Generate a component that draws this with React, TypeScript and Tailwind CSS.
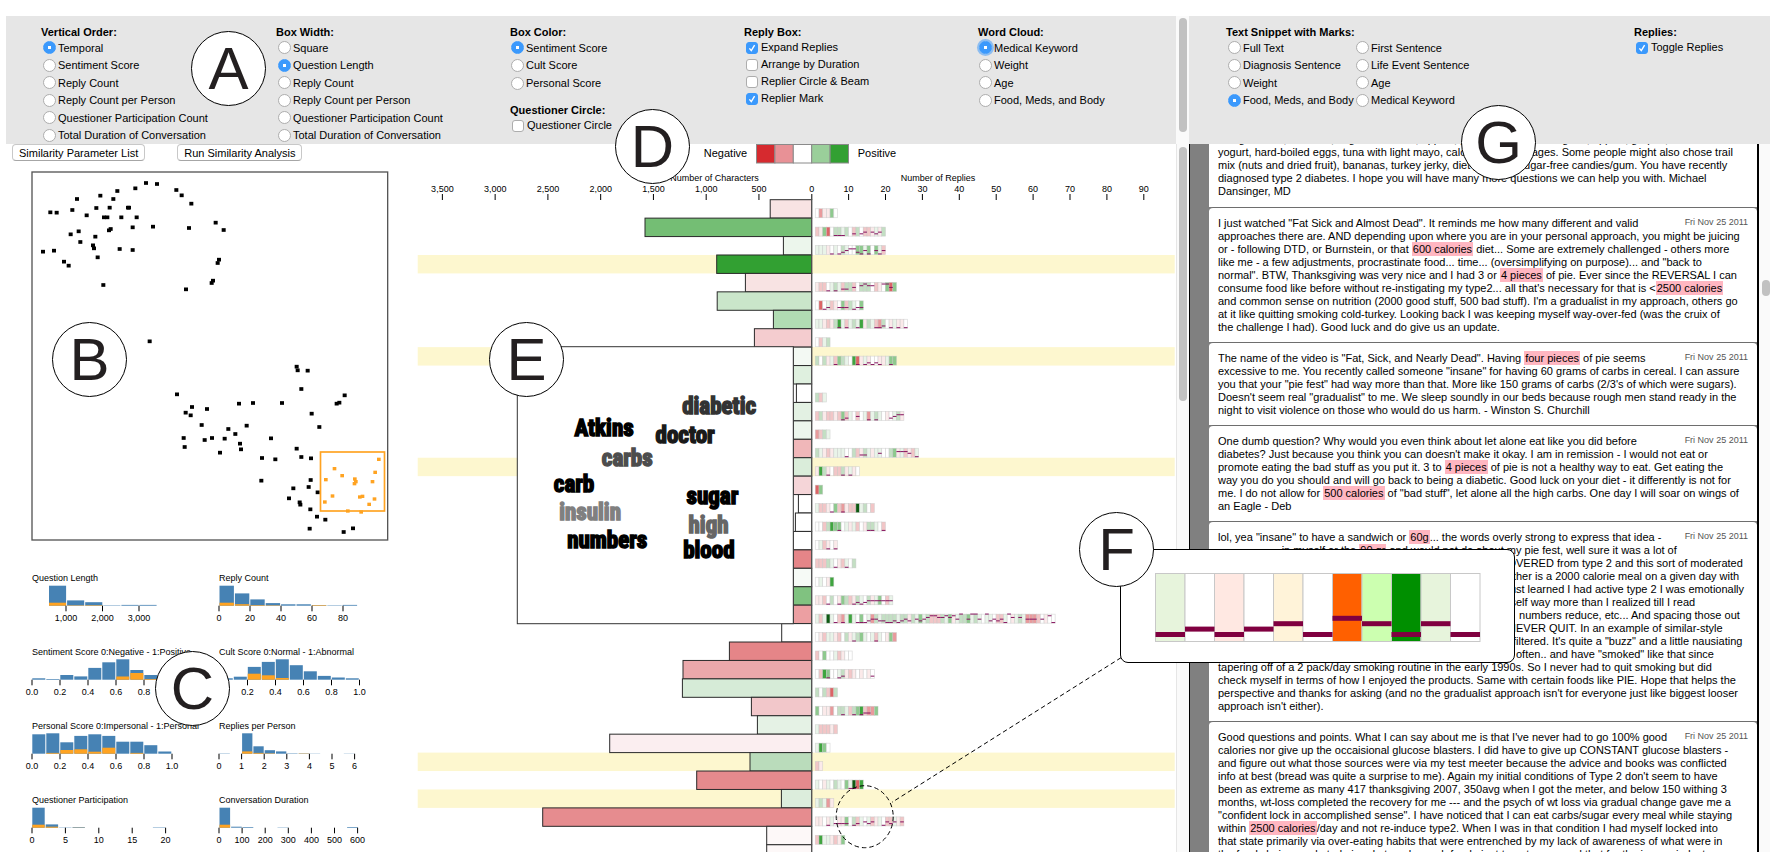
import React from "react";

const FONT = "font-['Liberation_Sans',Arial,sans-serif]";

/* ---------- form controls ---------- */

type RadioProps = { name: string; label: string; checked?: boolean; ring?: boolean };

function Radio({ name, label, checked, ring }: RadioProps) {
  return (
    <label className="flex items-center gap-[2px] whitespace-nowrap">
      <input
        type="radio"
        name={name}
        defaultChecked={checked}
        className={
          "size-[13px] shrink-0 appearance-none rounded-full border border-[#adadad] bg-white checked:border-[#3b99fc] checked:bg-[radial-gradient(circle,#fff_0_1.5px,#3b99fc_2px)]" +
          (ring ? " shadow-[0_0_0_2px_#8dbdf0]" : "")
        }
      />
      {label}
    </label>
  );
}

function Check({ label, checked }: { label: string; checked?: boolean }) {
  return (
    <label className="flex h-[17px] items-center gap-[3px] whitespace-nowrap">
      <span className="grid size-[12px] shrink-0">
        <input
          type="checkbox"
          defaultChecked={checked}
          className="peer col-start-1 row-start-1 size-[12px] appearance-none rounded-[3px] border border-[#adadad] bg-white checked:border-[#3b99fc] checked:bg-[#3b99fc]"
        />
        <svg
          viewBox="0 0 12 12"
          className="pointer-events-none invisible col-start-1 row-start-1 size-[12px] peer-checked:visible"
          fill="none"
          stroke="white"
          strokeWidth="1.4"
        >
          <path d="M3.4 6.4 L5.3 8.6 L8.6 3.2" />
        </svg>
      </span>
      {label}
    </label>
  );
}

function Legend({ children }: { children: React.ReactNode }) {
  return <legend className="h-[13px] font-bold leading-[13px] whitespace-nowrap">{children}</legend>;
}

const ORDER = [
  "Sentiment Score",
  "Reply Count",
  "Reply Count per Person",
  "Questioner Participation Count",
  "Total Duration of Conversation",
];

function MainControls() {
  return (
    <div className="grid flex-1 grid-cols-5 bg-[#e6e6e6] pt-[10px]">
      <fieldset className="pl-[35px]">
        <Legend>Vertical Order:</Legend>
        <div className="grid h-[105px] grid-rows-6 pl-[2px]">
          <Radio name="order" label="Temporal" checked />
          {ORDER.map((l) => (
            <Radio key={l} name="order" label={l} />
          ))}
        </div>
      </fieldset>
      <fieldset className="pl-[36px]">
        <Legend>Box Width:</Legend>
        <div className="grid h-[105px] grid-rows-6 pl-[2px]">
          <Radio name="width" label="Square" />
          <Radio name="width" label="Question Length" checked />
          {ORDER.slice(1).map((l) => (
            <Radio key={l} name="width" label={l} />
          ))}
        </div>
      </fieldset>
      <div className="pl-[36px]">
        <fieldset>
          <Legend>Box Color:</Legend>
          <div className="grid h-[53px] grid-rows-3 pl-[1px]">
            <Radio name="color" label="Sentiment Score" checked />
            <Radio name="color" label="Cult Score" />
            <Radio name="color" label="Personal Score" />
          </div>
        </fieldset>
        <fieldset className="mt-[12px]">
          <Legend>Questioner Circle:</Legend>
          <div className="pl-[2px]">
            <Check label="Questioner Circle" />
          </div>
        </fieldset>
      </div>
      <fieldset className="pl-[36px]">
        <Legend>Reply Box:</Legend>
        <div className="pl-[2px]">
          <Check label="Expand Replies" checked />
          <Check label="Arrange by Duration" />
          <Check label="Replier Circle & Beam" />
          <Check label="Replier Mark" checked />
        </div>
      </fieldset>
      <fieldset className="pl-[36px]">
        <Legend>Word Cloud:</Legend>
        <div className="grid h-[70px] grid-rows-4 pl-[1px]">
          <Radio name="cloud" label="Medical Keyword" checked ring />
          <Radio name="cloud" label="Weight" />
          <Radio name="cloud" label="Age" />
          <Radio name="cloud" label="Food, Meds, and Body" />
        </div>
      </fieldset>
    </div>
  );
}

function SnippetControls() {
  return (
    <div className="flex w-[581px] bg-[#e6e6e6] pt-[10px] pl-[37px]">
      <fieldset className="w-[408px]">
        <Legend>Text Snippet with Marks:</Legend>
        <div className="grid h-[70px] grid-cols-[128px_1fr] grid-rows-4 pl-[2px]">
          <Radio name="snippet" label="Full Text" />
          <Radio name="snippet" label="First Sentence" />
          <Radio name="snippet" label="Diagnosis Sentence" />
          <Radio name="snippet" label="Life Event Sentence" />
          <Radio name="snippet" label="Weight" />
          <Radio name="snippet" label="Age" />
          <Radio name="snippet" label="Food, Meds, and Body" checked />
          <Radio name="snippet" label="Medical Keyword" />
        </div>
      </fieldset>
      <fieldset>
        <Legend>Replies:</Legend>
        <div className="pl-[2px]">
          <Check label="Toggle Replies" checked />
        </div>
      </fieldset>
    </div>
  );
}

/* ---------- similarity scatter plot ---------- */

const POINTS: number[][] = [
  [438, 69], [471, 72], [406, 85], [352, 93], [301, 107], [340, 117], [231, 117], [529, 90], [545, 106], [574, 131],
  [151, 157], [170, 158], [217, 150], [289, 144], [329, 143], [384, 143], [387, 143], [260, 166], [312, 172], [322, 172],
  [364, 172], [410, 172], [398, 202], [459, 200], [567, 204], [647, 188], [671, 210], [236, 214], [212, 223], [327, 211],
  [332, 207], [286, 230], [241, 246], [279, 256], [282, 265], [129, 275], [162, 272], [359, 267], [398, 270], [293, 292],
  [192, 305], [206, 317], [657, 299], [653, 309], [310, 375], [558, 388], [639, 362], [635, 369], [449, 544], [890, 620],
  [893, 631], [923, 632], [904, 687], [1034, 706], [1018, 728], [1010, 731], [531, 703], [576, 741], [621, 747], [717, 731],
  [759, 729], [846, 729], [557, 758], [572, 766], [935, 761], [958, 801], [605, 795], [740, 797], [685, 807], [706, 822],
  [551, 834], [614, 840], [636, 834], [674, 836], [720, 851], [723, 868], [813, 835], [554, 861], [660, 878], [786, 894],
  [826, 898], [890, 866], [904, 891], [933, 895], [784, 962], [932, 960], [926, 981], [880, 985], [867, 1015], [899, 1027],
  [901, 1034], [953, 997], [931, 1048], [951, 1070], [976, 1079], [929, 1106], [1031, 1116], [1059, 1105],
];

const SELECTED: number[][] = [
  [1137, 898], [1004, 926], [1126, 937], [1027, 947], [978, 959], [1065, 957], [1068, 965], [1064, 971], [1118, 965],
  [998, 1008], [975, 1026], [1080, 1011], [1088, 1009], [1124, 1017], [1108, 1033], [1044, 1053], [1084, 1056],
];

function Scatter() {
  return (
    <svg viewBox="93 33 1074 1110" className="mt-[10px] ml-[25px] h-[370px] w-[358px]">
      <rect x="96" y="36" width="1067" height="1104" fill="white" stroke="#555" strokeWidth="4" />
      {POINTS.map(([x, y], i) => (
        <rect key={i} x={x - 6} y={y - 5.5} width="12" height="11" />
      ))}
      {SELECTED.map(([x, y], i) => (
        <rect key={i} x={x - 6} y={y - 5} width="11" height="10" fill="#ffa321" />
      ))}
      <rect x="961.5" y="876" width="192" height="177" fill="none" stroke="#ffa321" strokeWidth="5" />
    </svg>
  );
}

/* ---------- histograms ---------- */

type Hist = {
  title: string;
  start: number;
  pitch: number;
  total: number[];
  picked: number[];
  tickPitch: number;
  tickStart: number;
  ticks: string[];
};

const TENTHS = ["0.0", "0.2", "0.4", "0.6", "0.8", "1.0"];

const HISTS: Hist[] = [
  { title: "Question Length", start: 17, pitch: 18.1, total: [20, 5.3, 3.5, 0.4, 0.8, 0.8], picked: [3, 0.4, 0.5], tickStart: 34, tickPitch: 36.5, ticks: ["1,000", "2,000", "3,000"] },
  { title: "Reply Count", start: 0.5, pitch: 15.4, total: [20, 12.3, 6.3, 2.6, 1.4, 1.4, 0.6, 0.4, 0.8], picked: [3, 1.5, 0.6, 0.4, 0, 0, 0.6], tickStart: 0, tickPitch: 31, ticks: ["0", "20", "40", "60", "80"] },
  { title: "Sentiment Score 0:Negative - 1:Positive", start: 0.3, pitch: 14, total: [1.4, 0.7, 4.7, 3.3, 11.8, 17.4, 20.4, 9.7, 4.7, 2], picked: [0, 0, 0, 0, 0, 0, 3.2, 6.7, 0.7], tickStart: 0, tickPitch: 28, ticks: TENTHS },
  { title: "Cult Score 0:Normal - 1:Abnormal", start: 0.8, pitch: 14, total: [1.4, 3, 12.8, 17.8, 20.4, 14.5, 8.4, 3.8, 2.2, 1.4], picked: [0, 0, 6, 4.4, 1.7], tickStart: 0.5, tickPitch: 28, ticks: TENTHS },
  { title: "Personal Score 0:Impersonal - 1:Personal", start: 0.3, pitch: 14, total: [19.4, 20.4, 11.4, 17.8, 19.4, 17.8, 12, 12, 8.5, 2.2], picked: [0, 0.8, 3.7, 4.4, 2, 6, 0, 0.8], tickStart: 0, tickPitch: 28, ticks: TENTHS },
  { title: "Replies per Person", start: 0.5, pitch: 11.3, total: [0.3, 0, 20.4, 7.4, 3.5, 2.3, 0.4, 0.4, 0.2, 0, 0, 0.2], picked: [0, 0, 2.3, 0.8, 0.4, 0, 0, 0.3], tickStart: 0, tickPitch: 22.6, ticks: ["0", "1", "2", "3", "4", "5", "6"] },
  { title: "Questioner Participation", start: 0.3, pitch: 13.4, total: [20, 3.3, 0.3, 0.7, 0, 0, 0, 0, 0, 0.4], picked: [3, 1, 0, 0.2], tickStart: 0, tickPitch: 33.4, ticks: ["0", "5", "10", "15", "20"] },
  { title: "Conversation Duration", start: 0.5, pitch: 11.6, total: [20, 1, 0.7, 0, 0, 0.3, 0, 0, 0, 0, 0, 0.7], picked: [3], tickStart: 0, tickPitch: 23.1, ticks: ["0", "100", "200", "300", "400", "500", "600"] },
];

function Histogram({ h }: { h: Hist }) {
  return (
    <svg viewBox="0 0 186 74" className="h-[74px] w-[186px] overflow-visible text-[9px]">
      <text x="0" y="13">{h.title}</text>
      {h.total.map((v, i) => (
        <rect key={i} x={h.start + i * h.pitch} y={37.7 - v} width={h.pitch - 1} height={v} fill="#4682b4" />
      ))}
      {h.picked.map((v, i) => (
        <rect key={i} x={h.start + i * h.pitch} y={37.7 - v} width={h.pitch - 1} height={v} fill="#ffa321" />
      ))}
      {h.ticks.map((t, i) => (
        <g key={t}>
          <rect x={h.tickStart + i * h.tickPitch - 0.5} y="37.7" width="1" height="5.6" />
          <text x={h.tickStart + i * h.tickPitch} y="53" textAnchor="middle">{t}</text>
        </g>
      ))}
    </svg>
  );
}

function SimilarityPanel() {
  const button =
    "h-[17px] rounded-[4px] border border-[#c8c8c8] border-b-[#a6a6a6] bg-white px-[6px] text-[11px] leading-[14px] whitespace-nowrap";
  return (
    <section className="w-[411px] shrink-0">
      <div className="flex gap-[32px] pl-[6px]">
        <button type="button" className={button}>Similarity Parameter List</button>
        <button type="button" className={button}>Run Similarity Analysis</button>
      </div>
      <Scatter />
      <div className="mt-[27px] ml-[26px] grid grid-cols-[187px_187px]">
        {HISTS.map((h) => (
          <Histogram key={h.title} h={h} />
        ))}
      </div>
    </section>
  );
}

/* ---------- question / reply chart ---------- */

type Row = { w: number; fill: string; hot?: boolean; cells?: string; marks?: string };

const ROWS: Row[] = [
  { w: 41.5, fill: "#f8e3e3", cells: "wqppmw" },
  { w: 166.7, fill: "#74be74", cells: "PpmrwGGgGwPGwPPpgpG", marks: ".....000..1.12.212." },
  { w: 28.3, fill: "#ecf6ec", cells: "gggpwgwGgwwmmgmwmgP", marks: "....0.012331020.202" },
  { w: 95, fill: "#32a032", hot: true },
  { w: 66.3, fill: "#f8e3e3", cells: "pPPwgGgPGGPwGGGwPpwmrm", marks: "...0.0.11.2.3433..442." },
  { w: 94.5, fill: "#cae6ca", cells: "wrwgPpwmPGgwm", marks: "..01..111.011" },
  { w: 38.3, fill: "#b1dcb3", cells: "ggpPpGdgPgGgdpGgPqGwpgppw", marks: "......0.0..0....001.0.0.0" },
  { w: 57.3, fill: "#f4cccf", cells: "wPgG" },
  { w: 18.4, fill: "#f3f9f3", hot: true, cells: "GwGpgPmGgwdrpgpwwppgmm", marks: ".....0.....0.01010..0." },
  { w: 18.4, fill: "#dff0df" },
  { w: 15.3, fill: "#ffffff", cells: "GPg" },
  { w: 18.4, fill: "#e3f1e3", cells: "PGpPPpPmPgwPwgqgGgwpwgGp", marks: ".......01..2..0.0...1233" },
  { w: 18.4, fill: "#edf6ed", cells: "qPGg" },
  { w: 18.4, fill: "#f0b7b9", cells: "GgpPpgggwwGPpGgpggwwGmpgPpPg", marks: "........0...11...2....3332.0" },
  { w: 18.4, fill: "#daedda", hot: true, cells: "pdGpwPPGpgpw", marks: "...0...0.0.." },
  { w: 18.4, fill: "#f5d5d8", cells: "rm" },
  { w: 13.3, fill: "#ffffff", cells: "gPPpwmPqpPPDgGwP", marks: "....0..0" },
  { w: 16.3, fill: "#ffffff", cells: "wwPGdmmwgpgPwpGGgwP", marks: "......0.......00..0" },
  { w: 18.4, fill: "#ffffff", cells: "wgPpwp", marks: "...0.0" },
  { w: 18.4, fill: "#e58588", cells: "PPPGgwpPgwG", marks: ".....0..0" },
  { w: 18.4, fill: "#f6faf6", cells: "wgwpd" },
  { w: 18.4, fill: "#80c280", cells: "ppPwGwpmGPpGgwGpgmwPg", marks: "...0..0...01012222222" },
  { w: 18.4, fill: "#ec9fa2", cells: "gPgDgwPqgdgwmwgqGgGGGGgGGpGgmgGPPPGgmpgGGmgGgwggwPPgwpgGgqqqPwpww", marks: ".....0.0...000122110010121.2123443343425.2552.51212053.3.222.2.40" },
  { w: 30, fill: "#ffffff", cells: "wpPggpPwGpgGmgwgPgwpmq", marks: "..........0.....0" },
  { w: 82.3, fill: "#e58588", cells: "PwmwwgPpww" },
  { w: 128.7, fill: "#eba8ab", cells: "wPdmwwgGpPpwpwpw", marks: "...0..01.......1" },
  { w: 129.3, fill: "#d6ebd7", cells: "GwGPrG" },
  { w: 60.3, fill: "#f2c7ca", cells: "mwppqwGGgPGmdPqqm", marks: ".......0..0.011" },
  { w: 54.3, fill: "#e5f2e5", cells: "gPPPpP" },
  { w: 202, fill: "#fbeef0", cells: "gdmw" },
  { w: 61.7, fill: "#badcbb", hot: true, cells: "Pp" },
  { w: 115, fill: "#e58a8d", cells: "gwpgwGgwmgDrd", marks: ".........00" },
  { w: 30.3, fill: "#dceddc", hot: true, cells: "gGgqp" },
  { w: 269, fill: "#e68c8f", cells: "ppwpgwppmwGPgwgPpgwPPgpP", marks: "...0.1111.01.212..0212.2" },
  { w: 45, fill: "#fdf8f8", cells: "PdggpPpm" },
  { w: 45, fill: "#fdf8f8" },
];

const CELL: Record<string, string> = {
  w: "#ffffff",
  p: "#fbeaea",
  P: "#f2c6c7",
  q: "#e99a9c",
  r: "#dc6466",
  g: "#e9f4e9",
  G: "#c3dfc3",
  m: "#8ec98e",
  d: "#3fa53f",
  D: "#0d5a12",
};

const TOP = 55.7;
const PITCH = 18.43;
const CELL_W = 3.69;

const WORDS: [string, number, number, string][] = [
  ["diabetic", 545, 222, "#333333"],
  ["Atkins", 222, 290, "#000000"],
  ["doctor", 465, 311, "#1a1a1a"],
  ["carbs", 304, 380, "#4d4d4d"],
  ["carb", 160, 456, "#000000"],
  ["sugar", 558, 492, "#000000"],
  ["insulin", 176, 542, "#808080"],
  ["high", 564, 581, "#666666"],
  ["numbers", 200, 624, "#000000"],
  ["blood", 548, 656, "#000000"],
];

function Chart() {
  return (
    <svg viewBox="-394.7 0 759 708" preserveAspectRatio="xMinYMin meet" className="h-full min-w-0 flex-1 text-[9px]">
      {ROWS.map((r, i) =>
        r.hot ? <rect key={i} x="-394" y={TOP + i * PITCH} width="757" height={PITCH} fill="#fdf7cf" /> : null,
      )}

      <g className="text-[11px]">
        <text x="-64.5" y="12.5" textAnchor="end">Negative</text>
        <text x="46" y="12.5">Positive</text>
      </g>
      {["#d62a2f", "#e89196", "#ffffff", "#9acf9a", "#32a032"].map((c, i) => (
        <rect key={c} x={-55.2 + i * 18.4} y="0.5" width="18.4" height="18.5" fill={c} stroke="#8a8a8a" />
      ))}

      <text x="-53" y="37" textAnchor="end">Number of Characters</text>
      <text x="89" y="37">Number of Replies</text>
      {["0", "500", "1,000", "1,500", "2,000", "2,500", "3,000", "3,500"].map((t, i) => (
        <g key={t}>
          <text x={-i * 52.76} y="47.5" textAnchor="middle">{t}</text>
          <rect x={-i * 52.76 - 0.5} y="50" width="1" height="6" />
        </g>
      ))}
      {[1, 2, 3, 4, 5, 6, 7, 8, 9].map((n) => (
        <g key={n}>
          <text x={n * 36.9} y="47.5" textAnchor="middle">{n * 10}</text>
          <rect x={n * 36.9 - 0.5} y="50" width="1" height="6" />
        </g>
      ))}

      {ROWS.map((r, i) => (
        <rect key={i} x={-r.w} y={TOP + i * PITCH} width={r.w} height={PITCH} fill={r.fill} stroke="#2a2a2a" strokeWidth="1" />
      ))}
      <rect x="-0.5" y="50" width="1" height="658" fill="#555" />

      {ROWS.map((r, i) => {
        const y = TOP + i * PITCH + 9;
        return (
          <g key={i}>
            {(r.cells ?? "").split("").map((c, k) => (
              <rect key={k} x={3.6 + k * CELL_W} y={y} width={CELL_W} height="9" fill={CELL[c]} stroke="#c4c4c4" strokeOpacity="0.6" strokeWidth="0.7" />
            ))}
            {(r.marks ?? "").split("").map((m, k) =>
              m === "." ? null : (
                <rect key={k} x={3.6 + k * CELL_W} y={y + 7.9 - Number(m) * 1.7} width={CELL_W} height="1" fill="#86135f" />
              ),
            )}
          </g>
        );
      })}

      <rect x="-294.4" y="202.7" width="276" height="277" fill="white" stroke="#333" />
      <g className="font-['Impact','Liberation_Sans_Narrow','Roboto_Condensed',sans-serif] text-[23px] font-bold">
        {WORDS.map(([t, x, y, c]) => (
          <text key={t} x={-311.2 + x / 3} y={195.5 + y / 3} fill={c} stroke={c} strokeWidth="1.5">{t}</text>
        ))}
      </g>
    </svg>
  );
}

/* ---------- snippets ---------- */

function M({ children }: { children: React.ReactNode }) {
  return <mark className="bg-[#ffb6c1] p-px text-black">{children}</mark>;
}

function Covered({ children }: { children?: React.ReactNode }) {
  return <span className="inline-block h-[13px] w-[298px] overflow-hidden text-right align-top">{children}</span>;
}

function Snippet({ lines }: { lines: React.ReactNode[] }) {
  return (
    <article className="shrink-0 rounded-t-[4px] border-t border-[#6e6e6e] bg-white px-[9px] pt-[9px] pb-[8px]">
      <time className="float-right text-[9px] leading-[11px] text-[#555]">Fri Nov 25 2011</time>
      {lines.map((l, i) => (
        <div key={i}>{l}</div>
      ))}
    </article>
  );
}

const SNIPPETS: React.ReactNode[][] = [
  [
    <>I just watched "Fat Sick and Almost Dead". It reminds me how many different and valid</>,
    <>approaches there are. AND depending upon where you are in your personal approach, you might be juicing</>,
    <>or - following DTD, or Burnstein, or that <M>600 calories</M> diet... Some are extremely challenged - others more</>,
    <>like me - a few adjustments, procrastinate food... time... (oversimplifying on purpose)... and "back to</>,
    <>normal". BTW, Thanksgiving was very nice and I had 3 or <M>4 pieces</M> of pie. Ever since the REVERSAL I can</>,
    <>consume food like before without re-instigating my type2... all that's necessary for that is &lt;<M>2500 calories</M></>,
    <>and common sense on nutrition (2000 good stuff, 500 bad stuff). I'm a gradualist in my approach, others go</>,
    <>at it like quitting smoking cold-turkey. Looking back I was keeping myself way-over-fed (was the cruix of</>,
    <>the challenge I had). Good luck and do give us an update.</>,
  ],
  [
    <>The name of the video is "Fat, Sick, and Nearly Dead". Having <M>four pieces</M> of pie seems</>,
    <>excessive to me. You recently called someone "insane" for having 60 grams of carbs in cereal. I can assure</>,
    <>you that your "pie fest" had way more than that. More like 150 grams of carbs (2/3's of which were sugars).</>,
    <>Doesn't seem real "gradualist" to me. We sleep soundly in our beds because rough men stand ready in the</>,
    <>night to visit violence on those who would do us harm. - Winston S. Churchill</>,
  ],
  [
    <>One dumb question? Why would you even think about let alone eat like you did before</>,
    <>diabetes? Just because you think you can doesn't make it okay. I am in remission - I would not eat or</>,
    <>promote eating the bad stuff as you put it. 3 to <M>4 pieces</M> of pie is not a healthy way to eat. Get eating the</>,
    <>way you do you should and will go back to being a diabetic. Good luck on your diet - it differently is not for</>,
    <>me. I do not allow for <M>500 calories</M> of "bad stuff", let alone all the high carbs. One day I will soar on wings of</>,
    <>an Eagle - Deb</>,
  ],
  [
    <>lol, yea "insane" to have a sandwich or <M>60g</M>... the words overly strong to express that idea -</>,
    <><Covered>in myself or the <M>90 gr</M> and would not do about m</Covered>y pie fest, well sure it was a lot of</>,
    <><Covered>O</Covered>VERED from type 2 and this sort of moderated</>,
    <><Covered>t</Covered>her is a 2000 calorie meal on a given day with</>,
    <><Covered>ju</Covered>st learned I had active type 2 I was emotionally</>,
    <><Covered>mys</Covered>elf way more than I realized till I read</>,
    <><Covered />{" "}numbers reduce, etc... And spacing those out</>,
    <><Covered>N</Covered>EVER QUIT. In an example of similar-style</>,
    <><Covered>unf</Covered>iltered. It's quite a "buzz" and a little nausiating</>,
    <><Covered />often.. and have "smoked" like that since</>,
    <>tapering off of a 2 pack/day smoking routine in the early 1990s. So I never had to quit smoking but did</>,
    <>check myself in terms of how I enjoyed the products. Same with certain foods like PIE. Hope that helps the</>,
    <>perspective and thanks for asking (and no the gradualist approach isn't for everyone just like biggest looser</>,
    <>approach isn't either).</>,
  ],
  [
    <>Good questions and points. What I can say about me is that I've never had to go 100% good</>,
    <>calories nor give up the occaisional glucose blasters. I did have to give up CONSTANT glucose blasters -</>,
    <>and figure out what those sources were via my test meeter because the advice and books was conflicted</>,
    <>info at best (bread was quite a surprise to me). Again my initial conditions of Type 2 don't seem to have</>,
    <>been as extreme as many 417 thanksgiving 2007, 350avg when I got the meter, and below 150 withing 3</>,
    <>months, wt-loss completed the recovery for me --- and the psych of wt loss via gradual change gave me a</>,
    <>"confident lock in accomplished sense". I have noticed that I can eat carbs/sugar every meal while staying</>,
    <>within <M>2500 calories</M>/day and not re-induce type2. When I was in that condition I had myself locked into</>,
    <>that state primarily via over-eating habits that were entrenched by my lack of awareness of what were in</>,
    <>the foods being marketed aimed at me by each food giant to eat more, and that for the insane industry</>,
  ],
];

function SnippetPanel() {
  return (
    <section className="flex w-[581px]">
      <div className="flex min-h-0 flex-1 flex-col overflow-hidden border-r-2 border-l border-black bg-[#808080] pl-[19px] text-[11px] leading-[13px] whitespace-nowrap">
        <article className="-mt-[11px] shrink-0 bg-white px-[9px] pb-[9px]">
          <div>string cheese, almonds, vegetable sticks, apples, peanut butter, whole grain, apples, grapes, low-fat</div>
          <div>yogurt, hard-boiled eggs, tuna with light mayo, calorie-free beverages. Some people might also chose trail</div>
          <div>mix (nuts and dried fruit), bananas, turkey jerky, diet pudding, sugar-free candies/gum. You have recently</div>
          <div>diagnosed type 2 diabetes. I hope you will have many more questions we can help you with. Michael</div>
          <div>Dansinger, MD</div>
        </article>
        {SNIPPETS.map((lines, i) => (
          <Snippet key={i} lines={lines} />
        ))}
      </div>
      <div className="w-[11px] bg-[#fafafa] pt-[136px] pl-[3px]">
        <div className="h-[16px] w-[8px] rounded-full bg-[#c1c1c1]" />
      </div>
    </section>
  );
}

/* ---------- annotations ---------- */

function Tag({ letter, place }: { letter: string; place: string }) {
  return (
    <div
      className={
        "absolute flex size-[75px] items-center justify-center rounded-full border border-black bg-white text-[60px] leading-none text-[#231f20] " +
        place
      }
    >
      {letter}
    </div>
  );
}

const DETAIL: [string, number][] = [
  ["#e7f4dc", 0], ["#ffffff", 1], ["#ffe8e2", 0], ["#ffffff", 1], ["#fff3d9", 2], ["#ffffff", 0],
  ["#ff6000", 3], ["#ccffb0", 2], ["#008f00", 0], ["#e7f4dc", 2], ["#ffffff", 0],
];

function Callout() {
  return (
    <>
      <svg viewBox="0 0 300 200" className="absolute top-[650px] left-[830px] h-[200px] w-[300px]" fill="none" stroke="black">
        <path d="M291 7.7 L62 152.3" strokeDasharray="4.5 3" />
        <ellipse cx="34.7" cy="166.7" rx="28.5" ry="31" strokeDasharray="4.5 3" />
      </svg>
      <div className="absolute top-[549px] left-[1120px] h-[114px] w-[395px] rounded-[8px] border border-black bg-white pt-[23px] pl-[34px]">
        <svg viewBox="0 0 326 70" className="h-[70px] w-[326px]">
          {DETAIL.map(([c], i) => (
            <rect key={i} x={0.5 + i * 29.5} y="0.5" width="29.5" height="68" fill={c} stroke="#c8c8c8" />
          ))}
          {DETAIL.map(([, l], i) => (
            <rect key={i} x={0.5 + i * 29.5} y={59 - l * 5.4} width="29.5" height="5" fill="#800040" />
          ))}
        </svg>
      </div>
    </>
  );
}

export default function App() {
  return (
    <main className={"relative flex h-screen min-h-[600px] flex-col overflow-hidden bg-white px-[6px] pt-4 pb-2 text-[11px] text-black " + FONT}>
      <header className="flex h-[128px] shrink-0">
        <MainControls />
        <div className="w-[13px] shrink-0 bg-[#fafafa] pt-[2px] pl-[3px]">
          <div className="h-[114px] w-[8px] rounded-full bg-[#c1c1c1]" />
        </div>
        <SnippetControls />
      </header>
      <div className="flex min-h-0 flex-1">
        <div className="flex min-w-0 flex-1">
          <SimilarityPanel />
          <Chart />
        </div>
        <div className="w-[13px] shrink-0 border-l border-[#e6e6e6] bg-[#fafafa] pt-[3px] pl-[2px]">
          <div className="h-[254px] w-[8px] rounded-full bg-[#c1c1c1]" />
        </div>
        <SnippetPanel />
      </div>

      <Callout />
      <Tag letter="A" place="top-[31px] left-[191px]" />
      <Tag letter="B" place="top-[322px] left-[52px]" />
      <Tag letter="C" place="top-[651px] left-[155px]" />
      <Tag letter="D" place="top-[109px] left-[615px]" />
      <Tag letter="E" place="top-[322px] left-[489px]" />
      <Tag letter="F" place="top-[512px] left-[1079px]" />
      <Tag letter="G" place="top-[105px] left-[1461px]" />
    </main>
  );
}
